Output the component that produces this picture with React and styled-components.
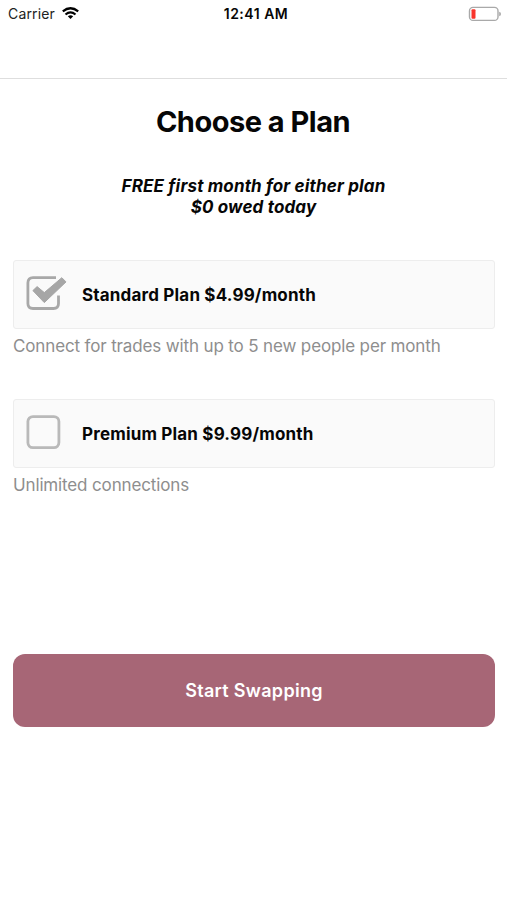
import React, { useState } from "react";
import styled, { createGlobalStyle } from "styled-components";

const plans = [
  {
    id: "standard",
    label: "Standard Plan $4.99/month",
    info: "Connect for trades with up to 5 new people per month"
  },
  {
    id: "premium",
    label: "Premium Plan $9.99/month",
    info: "Unlimited connections"
  }
];

const CheckIcon = ({ checked }) => (
  <Icon viewBox="0 0 42 36">
    {checked ? (
      <>
        <path
          d="M31 2.7H8Q2.9 2.7 2.9 8V28.5Q2.9 33.5 8 33.5H28.4Q33.5 33.5 33.5 28.5V20.5"
          fill="none"
          stroke="#a8a8a8"
          strokeWidth="2.8"
        />
        <path
          d="M7.9 15.6L12.1 11.6L19.3 17.6L36.8 2.7L41 6.9L19.3 27.6Z"
          fill="#a6a6a6"
          stroke="#a6a6a6"
          strokeWidth="1"
          strokeLinejoin="round"
        />
      </>
    ) : (
      <rect
        x="2.9"
        y="2.6"
        width="31"
        height="31"
        rx="5"
        fill="none"
        stroke="#b9b9b9"
        strokeWidth="2.8"
      />
    )}
  </Icon>
);

const App = () => {
  const [selected, setSelected] = useState("standard");

  return (
    <Screen>
      <GlobalStyle />
      <StatusBar>
        <Carrier>
          <span>Carrier</span>
          <svg width="17" height="13" viewBox="0 0 17 13">
            <g fill="none" stroke="#000" strokeWidth="2.2">
              <path d="M0.8 4.4Q8.5 -1.9 16.2 4.4" />
              <path d="M3.5 7.5Q8.5 3.3 13.5 7.5" />
            </g>
            <path d="M5.8 9.3Q8.5 7.1 11.2 9.3L8.5 12Z" fill="#000" />
          </svg>
        </Carrier>
        <Time>12:41 AM</Time>
        <Battery>
          <svg width="34" height="16" viewBox="0 0 34 16">
            <rect
              x="1.5"
              y="1.4"
              width="28.5"
              height="13"
              rx="3.5"
              fill="none"
              stroke="#a9a9a9"
              strokeWidth="1.4"
            />
            <rect x="3.5" y="3.3" width="4" height="9.4" rx="1" fill="#f8342b" />
            <path d="M31.2 5.8Q33 6.3 33 8T31.2 10.2Z" fill="#a9a9a9" />
          </svg>
        </Battery>
      </StatusBar>
      <NavBar />
      <Content>
        <Title>Choose a Plan</Title>
        <Offer>
          FREE first month for either plan
          <br />
          $0 owed today
        </Offer>
        {plans.map(plan => (
          <Plan key={plan.id}>
            <PlanButton onClick={() => setSelected(plan.id)}>
              <CheckIcon checked={selected === plan.id} />
              <PlanLabel>{plan.label}</PlanLabel>
            </PlanButton>
            <PlanInfo>{plan.info}</PlanInfo>
          </Plan>
        ))}
        <StartButton>Start Swapping</StartButton>
      </Content>
    </Screen>
  );
};

export default App;

const GlobalStyle = createGlobalStyle`
  * {
    box-sizing: border-box;
  }

  body {
    margin: 0;
    background: #fff;
    font-family: Inter, "Liberation Sans", sans-serif;
  }
`;

const Screen = styled.div`
  min-height: 900px;
  background: #fff;
  color: #060606;
`;

const StatusBar = styled.div`
  display: grid;
  grid-template-columns: 1fr auto 1fr;
  align-items: center;
  height: 27px;
  padding: 0 5px 0 8px;
  font-size: 14px;
`;

const Carrier = styled.div`
  display: flex;
  align-items: center;
  gap: 7px;
  color: #222;
  letter-spacing: 0.15px;
`;

const Time = styled.div`
  margin-left: 2px;
  font-weight: 600;
  letter-spacing: 0.5px;
`;

const Battery = styled.div`
  display: flex;
  justify-content: flex-end;

  svg {
    display: block;
  }
`;

const NavBar = styled.div`
  height: 52px;
  border-bottom: 1px solid #dedede;
`;

const Content = styled.div`
  padding: 25px 12px 0 13px;
`;

const Title = styled.h1`
  margin: 0;
  padding-right: 2px;
  text-align: center;
  font-size: 29px;
  line-height: 36px;
  font-weight: 700;
  letter-spacing: -0.5px;
`;

const Offer = styled.div`
  margin: 36px 0 42px;
  padding-right: 1px;
  text-align: center;
  font-size: 17px;
  line-height: 21px;
  font-weight: 700;
  font-style: italic;
  letter-spacing: 0.15px;
`;

const Plan = styled.div`
  height: 139px;
`;

const PlanButton = styled.button`
  display: flex;
  align-items: center;
  width: 100%;
  height: 69px;
  padding: 0 11px 4px;
  border: 1px solid #ededed;
  border-radius: 3px;
  background: #fafafa;
  color: #060606;
  font: inherit;
  text-align: left;
  cursor: pointer;
`;

const Icon = styled.svg`
  flex: none;
  width: 42px;
  height: 36px;
`;

const PlanLabel = styled.span`
  margin: 4px 0 0 15px;
  font-size: 17px;
  font-weight: 700;
  letter-spacing: 0.18px;
`;

const PlanInfo = styled.p`
  margin: 6px 0 0;
  color: #8e8e8e;
  font-size: 17px;
  line-height: 22px;
  letter-spacing: -0.14px;
`;

const StartButton = styled.button`
  display: block;
  width: 100%;
  height: 73px;
  margin-top: 116px;
  border: 0;
  border-radius: 12px;
  background: #a76676;
  color: #fff;
  font: inherit;
  font-size: 18px;
  font-weight: 600;
  letter-spacing: 0.3px;
  cursor: pointer;
`;
